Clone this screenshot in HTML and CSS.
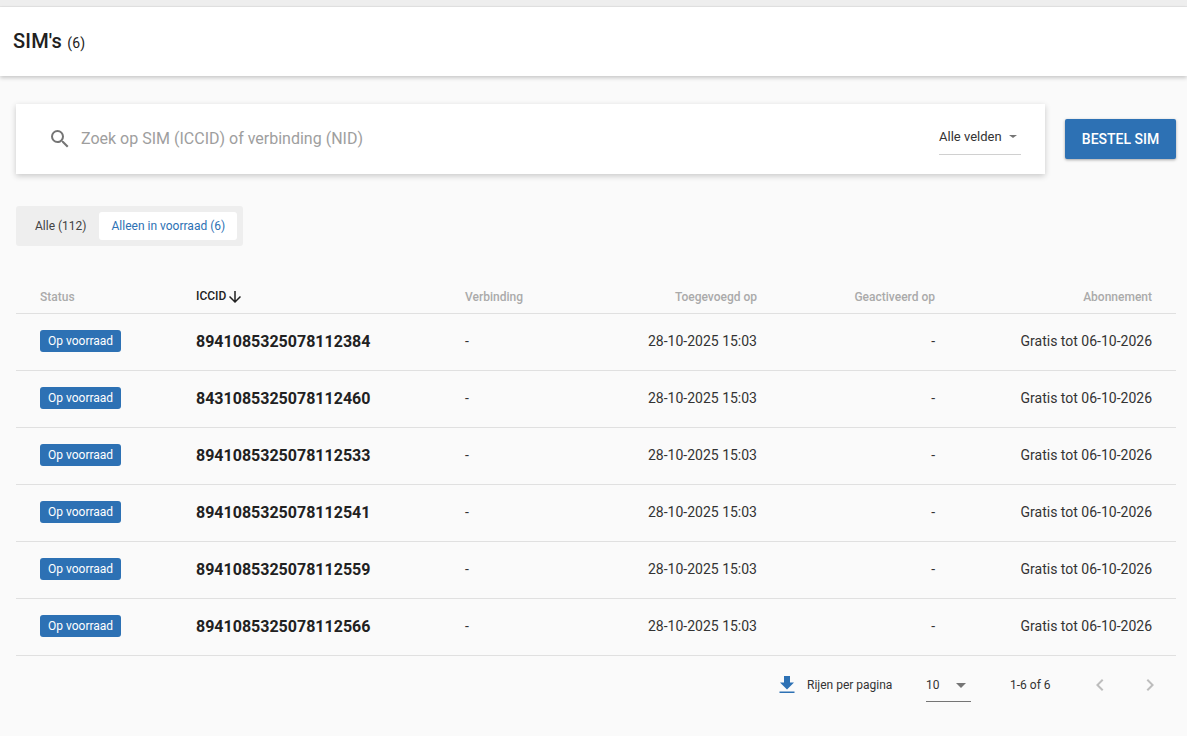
FILE: index.html
```html
<!DOCTYPE html>
<html lang="nl">
<head>
  <meta charset="UTF-8">
  <meta name="viewport" content="width=device-width, initial-scale=1">
  <title>SIM's</title>
  <link rel="stylesheet" href="styles.css">
</head>
<body>
  <div class="top-strip"></div>

  <header class="page-header">
    <h1>SIM's <span class="count">(6)</span></h1>
  </header>

  <main class="page-main">
    <div class="search-row">
      <div class="search-card">
        <svg class="search-icon" viewBox="0 0 24 24" width="24" height="24"><path d="M15.5 14h-.79l-.28-.27A6.47 6.47 0 0 0 16 9.5 6.5 6.5 0 1 0 9.5 16c1.61 0 3.09-.59 4.23-1.57l.27.28v.79l5 4.99L20.49 19l-4.99-5zm-6 0C7.01 14 5 11.99 5 9.5S7.01 5 9.5 5 14 7.01 14 9.5 11.99 14 9.5 14z"/></svg>
        <span class="search-placeholder">Zoek op SIM (ICCID) of verbinding (NID)</span>
        <div class="field-select">
          <span>Alle velden</span>
          <span class="caret small"></span>
        </div>
      </div>
      <button class="order-button">BESTEL SIM</button>
    </div>

    <div class="tabs">
      <span class="tab">Alle (112)</span>
      <span class="tab active">Alleen in voorraad (6)</span>
    </div>

    <table class="sim-table">
      <colgroup>
        <col class="col-status">
        <col class="col-iccid">
        <col class="col-conn">
        <col class="col-added">
        <col class="col-active">
        <col class="col-sub">
      </colgroup>
      <thead>
        <tr>
          <th class="first">Status</th>
          <th class="sorted">ICCID<svg class="sort-icon" viewBox="0 0 24 24" width="18" height="18"><path d="M20 12l-1.41-1.41L13 16.17V4h-2v12.17l-5.58-5.59L4 12l8 8 8-8z"/></svg></th>
          <th>Verbinding</th>
          <th class="right">Toegevoegd op</th>
          <th class="right">Geactiveerd op</th>
          <th class="right last">Abonnement</th>
        </tr>
      </thead>
      <tbody>
        <tr>
          <td class="first"><span class="badge">Op voorraad</span></td>
          <td class="iccid">8941085325078112384</td>
          <td>-</td>
          <td class="right">28-10-2025 15:03</td>
          <td class="right">-</td>
          <td class="right last">Gratis tot 06-10-2026</td>
        </tr>
        <tr>
          <td class="first"><span class="badge">Op voorraad</span></td>
          <td class="iccid">8431085325078112460</td>
          <td>-</td>
          <td class="right">28-10-2025 15:03</td>
          <td class="right">-</td>
          <td class="right last">Gratis tot 06-10-2026</td>
        </tr>
        <tr>
          <td class="first"><span class="badge">Op voorraad</span></td>
          <td class="iccid">8941085325078112533</td>
          <td>-</td>
          <td class="right">28-10-2025 15:03</td>
          <td class="right">-</td>
          <td class="right last">Gratis tot 06-10-2026</td>
        </tr>
        <tr>
          <td class="first"><span class="badge">Op voorraad</span></td>
          <td class="iccid">8941085325078112541</td>
          <td>-</td>
          <td class="right">28-10-2025 15:03</td>
          <td class="right">-</td>
          <td class="right last">Gratis tot 06-10-2026</td>
        </tr>
        <tr>
          <td class="first"><span class="badge">Op voorraad</span></td>
          <td class="iccid">8941085325078112559</td>
          <td>-</td>
          <td class="right">28-10-2025 15:03</td>
          <td class="right">-</td>
          <td class="right last">Gratis tot 06-10-2026</td>
        </tr>
        <tr>
          <td class="first"><span class="badge">Op voorraad</span></td>
          <td class="iccid">8941085325078112566</td>
          <td>-</td>
          <td class="right">28-10-2025 15:03</td>
          <td class="right">-</td>
          <td class="right last">Gratis tot 06-10-2026</td>
        </tr>
      </tbody>
    </table>

    <div class="table-footer">
      <svg class="download-icon" viewBox="0 0 16 18" width="16" height="18"><path d="M15 6.5h-4V0H5v6.5H1l7 7 7-7zM0.5 15.5v1.6h15v-1.6z"/></svg>
      <span class="rows-label">Rijen per pagina</span>
      <div class="rows-select">
        <span>10</span>
        <span class="caret"></span>
      </div>
      <span class="range">1-6 of 6</span>
      <svg class="page-icon prev" viewBox="0 0 24 24" width="24" height="24"><path d="M15.41 7.41L14 6l-6 6 6 6 1.41-1.41L10.83 12z"/></svg>
      <svg class="page-icon next" viewBox="0 0 24 24" width="24" height="24"><path d="M10 6L8.59 7.41 13.17 12l-4.58 4.59L10 18l6-6z"/></svg>
    </div>
  </main>
</body>
</html>
```

FILE: styles.css
```css
* {
  box-sizing: border-box;
  margin: 0;
  padding: 0;
}

html, body {
  height: 100%;
}

body {
  background-color: #fafafa;
  color: #212121;
  font-family: Roboto, "Liberation Sans", sans-serif;
  overflow: hidden;
}

.top-strip {
  height: 7px;
  background-color: #eeeeee;
  border-bottom: 1px solid #e4e4e4;
}

.page-header {
  height: 69px;
  display: flex;
  align-items: center;
  padding-left: 13px;
  background-color: white;
  box-shadow: 0 2px 4px rgba(0, 0, 0, 0.2);
  position: relative;
}

.page-header h1 {
  font-size: 20px;
  font-weight: 500;
  line-height: 24px;
  letter-spacing: 0.2px;
}

.page-header .count {
  font-size: 14px;
  font-weight: 400;
}

.page-main {
  padding: 28px 11px 0 16px;
}

/* Zoekbalk */
.search-row {
  display: flex;
  align-items: center;
  gap: 20px;
}

.search-card {
  flex: 1;
  height: 70px;
  display: flex;
  align-items: center;
  padding: 0 24px 0 32px;
  background-color: white;
  box-shadow: 0 2px 6px rgba(0, 0, 0, 0.2);
}

.search-icon {
  fill: #757575;
}

.search-placeholder {
  flex: 1;
  margin-left: 9px;
  margin-bottom: 1px;
  font-size: 16px;
  color: #9e9e9e;
}

.field-select {
  width: 82px;
  height: 32px;
  display: flex;
  align-items: center;
  justify-content: space-between;
  padding: 0 4px 4px 0;
  font-size: 13px;
  color: #333333;
  border-bottom: 1px solid #d0d0d0;
}

.caret {
  width: 0;
  height: 0;
  border-left: 5px solid transparent;
  border-right: 5px solid transparent;
  border-top: 5px solid #757575;
}

.caret.small {
  border-left-width: 4px;
  border-right-width: 4px;
  border-top-width: 3px;
}

.order-button {
  width: 111px;
  height: 40px;
  border: none;
  border-radius: 2px;
  background-color: #2d71b4;
  color: white;
  font-family: inherit;
  font-size: 14px;
  font-weight: 500;
  box-shadow: 0 1px 3px rgba(0, 0, 0, 0.35);
}

/* Tabs */
.tabs {
  display: inline-flex;
  align-items: center;
  height: 40px;
  margin-top: 32px;
  padding: 6px;
  background-color: #eeeeee;
  border-radius: 3px;
  font-size: 12px;
  vertical-align: top;
}

.tab {
  padding: 0 12px 0 13px;
  color: #424242;
}

.tab.active {
  height: 28px;
  line-height: 28px;
  background-color: white;
  border-radius: 3px;
  color: #2d71b4;
}

/* Tabel */
.sim-table {
  display: table;
  width: 1160px;
  margin-top: 27px;
  border-collapse: collapse;
  table-layout: fixed;
  font-size: 14px;
}

.col-status { width: 164px; }
.col-iccid { width: 269px; }
.col-conn { width: 120px; }
.col-added { width: 204px; }
.col-active { width: 178px; }
.col-sub { width: 225px; }

.sim-table th {
  height: 40px;
  padding: 8px 16px 0;
  text-align: left;
  font-size: 12px;
  font-weight: 500;
  color: #aaaaaa;
  border-bottom: 1px solid #e0e0e0;
}

.sim-table td {
  height: 57px;
  padding: 0 16px 2px;
  color: #333333;
  border-bottom: 1px solid #e0e0e0;
}

.sim-table th.sorted {
  color: #212121;
}

.sort-icon {
  vertical-align: middle;
  fill: #212121;
}

.sim-table .right {
  text-align: right;
}

.sim-table .first {
  padding-left: 24px;
}

.sim-table .last {
  padding-right: 24px;
}

.sim-table td.iccid {
  padding-bottom: 0;
  font-size: 16px;
  font-weight: 700;
  color: #212121;
}

.sim-table td.first {
  padding-bottom: 1px;
}

.badge {
  display: inline-block;
  height: 22px;
  line-height: 23px;
  padding: 0 8px;
  border-radius: 3px;
  background-color: #2d71b4;
  color: white;
  font-size: 12px;
  vertical-align: middle;
}

/* Paginering */
.table-footer {
  display: flex;
  align-items: center;
  height: 58px;
  padding-left: 763px;
  font-size: 12px;
  color: #333333;
}

.download-icon {
  fill: #2d71b4;
  margin-right: 12px;
}

.rows-label {
  width: 119px;
}

.rows-select {
  width: 45px;
  height: 34px;
  display: flex;
  align-items: center;
  justify-content: space-between;
  padding: 2px 5px 0 0;
  border-bottom: 1px solid #757575;
}

.range {
  margin-left: 39px;
  width: 78px;
}

.page-icon {
  fill: #bdbdbd;
}

.page-icon.next {
  margin-left: 26px;
}
```
